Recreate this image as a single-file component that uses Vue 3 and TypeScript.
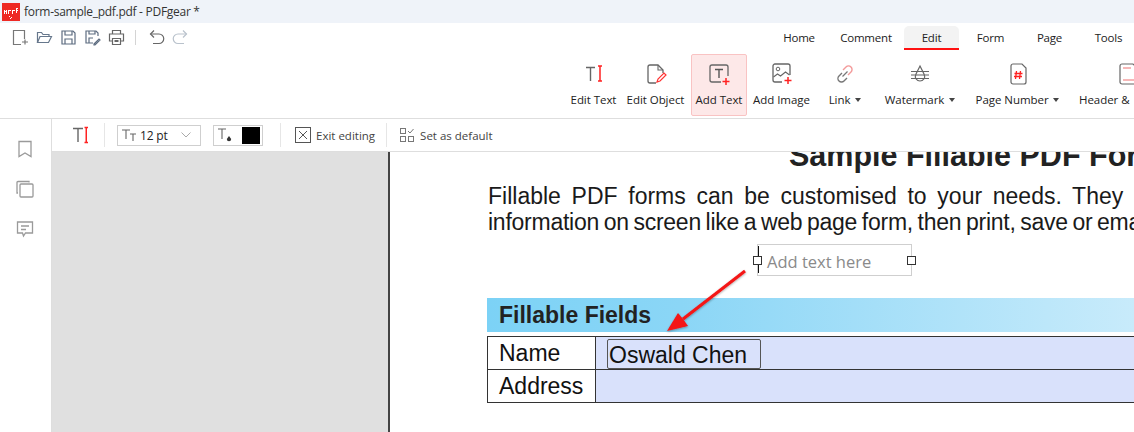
<script setup lang="ts">
const tabs = [
  { label: 'Home', w: 58 },
  { label: 'Comment', w: 76 },
  { label: 'Edit', w: 55, active: true },
  { label: 'Form', w: 63 },
  { label: 'Page', w: 55 },
  { label: 'Tools', w: 63 },
]
</script>

<template>
  <div class="app">
    <header class="titlebar">
      <svg class="logo" width="18" height="18" viewBox="0 0 18 18">
        <rect width="18" height="18" fill="#ee2a24" />
        <path d="M2 7h1v1h1V7h1v4H4V9H3v2H2zM6 7h3v1H7v3H6zM10 7h3v1h-2v3h-1zM14 5h2v1h-1v1h1v1h-1v2h-1z" fill="#fff" />
        <path d="M7 13h1v1H7zM9 14h1v1H9zM8 15h1v1H8z" fill="#fff" />
      </svg>
      <span class="title">form-sample_pdf.pdf - PDFgear *</span>
    </header>

    <section class="top">
      <div class="topRow">
        <div class="quick">
          <svg width="17" height="17" viewBox="0 0 17 17" fill="none" stroke="#777" stroke-width="1.2"><path d="M9 15.500H1.500v-14h11V10" /><path d="M10 13h6M13 10.500v5" /></svg>
          <svg width="17" height="17" viewBox="0 0 17 17" fill="none" stroke="#66778c" stroke-width="1.2"><path d="M1.500 13.500v-10h4l1.500 2h6v2" /><path d="M1.500 13.500l2.500-6h11.500l-3 6z" /></svg>
          <svg width="17" height="17" viewBox="0 0 17 17" fill="none" stroke="#5d6c80" stroke-width="1.2"><path d="M2 2h11l2 2v11H2z" /><path d="M5 2v4h7V2M5 15v-5h7v5" /></svg>
          <svg width="17" height="17" viewBox="0 0 17 17" fill="none" stroke="#5d6c80" stroke-width="1.2"><path d="M9 14H2V2h10l2 2v3" /><path d="M5 2v3h6V2M5 14V9h4" /><path d="M10 15l5-5 1 1-5 5h-1z" /></svg>
          <svg width="17" height="17" viewBox="0 0 17 17" fill="none" stroke="#666" stroke-width="1.2"><path d="M4.500 5V1.500h8V5" /><path d="M4 12H1.500V5h14v7H13" /><path d="M4.500 9.500h8v6h-8z" /><path d="M6.500 12h4" stroke-width="2" /></svg>
          <span class="vsep"></span>
          <svg width="16" height="17" viewBox="0 0 16 17" fill="none" stroke="#666" stroke-width="1.2"><path d="M5 1.500L1.500 5 5 8.500" /><path d="M1.500 5H10a4.500 4.500 0 0 1 0 9.500H4" /></svg>
          <svg width="16" height="17" viewBox="0 0 16 17" fill="none" stroke="#b9c2cc" stroke-width="1.2"><path d="M11 1.500L14.500 5 11 8.500" /><path d="M14.500 5H6a4.500 4.500 0 0 0 0 9.500h6" /></svg>
        </div>
        <nav class="tabs">
          <div v-for="t in tabs" :key="t.label" class="tab" :class="{ active: t.active }" :style="{ width: t.w + 'px' }">{{ t.label }}</div>
        </nav>
      </div>
      <div class="ribbon">
        <div class="rb" style="width: 57px">
          <svg width="24" height="24" viewBox="0 0 24 24" fill="none"><path d="M4 5.500h9M8.500 5.500V19" stroke="#666" stroke-width="1.400" /><path d="M16 4h4M16 19h4M18 4v15" stroke="#f22" stroke-width="1.500" /></svg>
          <span>Edit Text</span>
        </div>
        <div class="rb" style="width: 67px">
          <svg width="24" height="24" viewBox="0 0 24 24" fill="none"><path d="M12 21H6a2 2 0 0 1-2-2V5a2 2 0 0 1 2-2h8l5 5v3" stroke="#666" stroke-width="1.300" /><path d="M14 3v5h5" stroke="#666" stroke-width="1.100" /><path d="M13 20l1-3 6-6 2 2-6 6z" stroke="#f33" stroke-width="1.200" /></svg>
          <span>Edit Object</span>
        </div>
        <div class="rb on" style="width: 56px">
          <svg width="24" height="24" viewBox="0 0 24 24" fill="none"><path d="M14 20H5a2 2 0 0 1-2-2V5a2 2 0 0 1 2-2h14a2 2 0 0 1 2 2v9" stroke="#666" stroke-width="1.300" /><path d="M8 7.500h8M12 7.500V16" stroke="#555" stroke-width="1.400" /><path d="M19 16v7M15.500 19.500h7" stroke="#f22" stroke-width="1.500" /></svg>
          <span>Add Text</span>
        </div>
        <div class="rb" style="width: 69px">
          <svg width="24" height="24" viewBox="0 0 24 24" fill="none"><path d="M12 20H5a2 2 0 0 1-2-2V4a2 2 0 0 1 2-2h13a2 2 0 0 1 2 2v9" stroke="#666" stroke-width="1.300" /><circle cx="8" cy="7" r="1.800" stroke="#666" /><path d="M3.500 15l4-3 3 2 5-4 4 3" stroke="#666" stroke-width="1.100" /><path d="M18 15v7M14.500 18.500h7" stroke="#f22" stroke-width="1.500" /></svg>
          <span>Add Image</span>
        </div>
        <div class="rb" style="width: 58px">
          <svg width="24" height="24" viewBox="0 0 24 24" fill="none"><path d="M10 8l3-3a3.500 3.500 0 0 1 5 5l-3 3" stroke="#f39a9a" stroke-width="1.400" /><path d="M14 16l-3 3a3.500 3.500 0 0 1-5-5l3-3" stroke="#777" stroke-width="1.400" /><path d="M9.500 14.500l5-5" stroke="#777" stroke-width="1.300" /></svg>
          <span>Link <i class="caret"></i></span>
        </div>
        <div class="rb" style="width: 92px">
          <svg width="24" height="24" viewBox="0 0 24 24" fill="none" stroke="#666" stroke-width="1.200"><path d="M12 4l4 8c2 4-1 7-4 7s-6-3-4-7z" /><path d="M3 9.500h18M3 13h18M3 16.500h18" /></svg>
          <span>Watermark <i class="caret"></i></span>
        </div>
        <div class="rb" style="width: 103px">
          <svg width="24" height="24" viewBox="0 0 24 24" fill="none"><path d="M5 4a2 2 0 0 1 2-2h9l4 4v14a2 2 0 0 1-2 2H7a2 2 0 0 1-2-2z" stroke="#666" stroke-width="1.200" /><path d="M10.500 9l-1 8M14.500 9l-1 8M8.500 11.500h8M8 14.500h8" stroke="#f22" stroke-width="1.300" /></svg>
          <span>Page Number <i class="caret"></i></span>
        </div>
        <div class="rb clip">
          <svg width="24" height="24" viewBox="0 0 24 24" fill="none"><path d="M3 4a2 2 0 0 1 2-2h11l5 5v13a2 2 0 0 1-2 2H5a2 2 0 0 1-2-2z" stroke="#666" stroke-width="1.200" /><path d="M6 6h8M6 18h12" stroke="#f4a0a0" stroke-width="1.500" /></svg>
          <span>Header &amp;</span>
        </div>
      </div>
    </section>

    <section class="main">
      <aside class="side">
        <svg width="16" height="18" viewBox="0 0 16 18" fill="none" stroke="#9a9a9a" stroke-width="1.300"><path d="M2 1.500h12v15L8 13l-6 3.500z" /></svg>
        <svg width="18" height="18" viewBox="0 0 18 18" fill="none" stroke="#9a9a9a" stroke-width="1.300"><path d="M13 2.500V1.500H2a1 1 0 0 0-1 1V13h1" /><rect x="4" y="4" width="13" height="13" rx="1" /></svg>
        <svg width="18" height="18" viewBox="0 0 18 18" fill="none" stroke="#9a9a9a" stroke-width="1.300"><path d="M1.500 2h15v11h-7l-2 3-1-3h-5z" /><path d="M5 6h8M5 9.500h5" /></svg>
      </aside>
      <div class="work">
        <div class="props">
          <svg class="propT" width="24" height="20" viewBox="0 0 24 20" fill="none"><path d="M2 3.500h10M7 3.500V17" stroke="#666" stroke-width="1.400" /><path d="M13.500 2.500h3.500M13.500 17.500h3.500M15.250 2.500v15" stroke="#f22" stroke-width="1.500" /></svg>
          <span class="psep"></span>
          <div class="sizeBox">
            <svg width="16" height="14" viewBox="0 0 16 14" fill="none" stroke="#666" stroke-width="1.100"><path d="M1 2h8M5 2v9M9 6h6M12 6v7" /></svg>
            <span class="sizeText">12 pt</span>
            <svg class="chev" width="10" height="6" viewBox="0 0 10 6" fill="none" stroke="#aaa"><path d="M.5.500L5 5 9.500.500" /></svg>
          </div>
          <div class="colorBox">
            <svg width="16" height="16" viewBox="0 0 16 16"><path d="M1 2h8M5 2v10" fill="none" stroke="#666" stroke-width="1.100" /><path d="M12 9l2.200 3a2.200 2.200 0 1 1-4.400 0z" fill="#333" /></svg>
            <span class="swatch"></span>
          </div>
          <span class="psep sep2"></span>
          <div class="pbtn">
            <svg width="16" height="16" viewBox="0 0 16 16" fill="none" stroke="#555" stroke-width="1"><rect x=".5" y=".5" width="15" height="15" /><path d="M4 4l8 8M12 4l-8 8" /></svg>
            <span>Exit editing</span>
          </div>
          <span class="psep sep3"></span>
          <div class="pbtn">
            <svg width="15" height="14" viewBox="0 0 15 14" fill="none" stroke="#777"><rect x=".5" y=".5" width="5" height="5" /><rect x=".5" y="8.500" width="5" height="5" /><rect x="8.500" y="8.500" width="5" height="5" /><path d="M8 3l2 2 3.500-4" /></svg>
            <span>Set as default</span>
          </div>
        </div>
        <div class="canvas">
          <div class="gray"></div>
          <div class="page">
            <h1 class="docTitle">Sample Fillable PDF Form</h1>
            <p class="docText just">Fillable PDF forms can be customised to your needs. They allow you to</p>
            <p class="docText">information on screen like a web page form, then print, save or email</p>
            <div class="spacer"></div>
            <div class="band">Fillable Fields</div>
            <div class="rows">
              <div class="row first">
                <div class="lbl">Name</div>
                <div class="val"><span class="field">Oswald Chen</span></div>
              </div>
              <div class="row">
                <div class="lbl">Address</div>
                <div class="val"></div>
              </div>
            </div>
            <div class="textBox">
              <span class="placeholder">Add text here</span>
              <i class="caretLine"></i>
              <i class="handle hl"></i>
              <i class="handle hr"></i>
            </div>
            <svg class="arrow" width="100" height="70" viewBox="0 0 100 70">
              <defs>
                <filter id="sh" x="-20%" y="-20%" width="140%" height="140%">
                  <feDropShadow dx="0" dy="1" stdDeviation="1" flood-color="#000" flood-opacity=".35" />
                </filter>
              </defs>
              <g filter="url(#sh)">
                <path d="M82 5L20 53" stroke="#f41414" stroke-width="3" fill="none" />
                <path d="M4 65L15 47 20 53 25 60z" fill="#f41414" />
              </g>
            </svg>
          </div>
        </div>
      </div>
    </section>
  </div>
</template>

<style>
html, body { margin: 0; background: #fff; }
</style>

<style scoped>
.app { width: 1134px; height: 432px; overflow: hidden; display: flex; flex-direction: column; font-family: "Open Sans", "Noto Sans", sans-serif; color: #222; background: #fff; }
.titlebar { height: 23px; flex: none; background: #eff3f9; display: flex; align-items: center; padding-left: 2px; gap: 4px; box-sizing: border-box; }
.title { font-size: 12px; letter-spacing: -.28px; color: #333; }
.top { height: 96px; flex: none; box-sizing: border-box; border-bottom: 1px solid #dedede; display: flex; flex-direction: column; }
.topRow { height: 30px; display: flex; justify-content: space-between; }
.quick { display: flex; align-items: flex-start; gap: 7px; padding: 6px 0 0 12px; }
.quick svg { display: block; }
.vsep { width: 1px; height: 15px; background: #d4d4d4; margin: 1px 6px 0 3px; }
.tabs { display: flex; margin-top: 3px; margin-right: -6px; height: 24px; }
.tab { font-size: 11.500px; line-height: 23px; text-align: center; letter-spacing: -.2px; color: #222; box-sizing: border-box; }
.tab.active { background: #f3f3f3; border-radius: 5px 5px 0 0; border-bottom: 2px solid #f11; }
.ribbon { display: flex; justify-content: flex-start; padding-left: 565px; margin-top: 1px; height: 62px; overflow: hidden; }
.rb { flex: none; box-sizing: border-box; display: flex; flex-direction: column; align-items: center; font-size: 11.500px; letter-spacing: -.05px; padding-top: 8px; gap: 6px; white-space: nowrap; color: #222; }
.rb span { line-height: 16px; display: block; }
.rb.on { margin-left: 2px; background: #fde8e8; border: 1px solid #f9c3c3; border-radius: 2px; padding-top: 7px; }
.rb.clip { align-items: flex-start; padding-left: 10px; width: 65px; }
.rb.clip svg { margin-left: 38px; }
.caret { display: inline-block; width: 0; height: 0; border-left: 3.500px solid transparent; border-right: 3.500px solid transparent; border-top: 4px solid #444; vertical-align: 2px; margin-left: 2px; }
.main { flex: 1; min-height: 0; display: flex; }
.side { width: 51px; flex: none; border-right: 1px solid #dedede; display: flex; flex-direction: column; align-items: center; gap: 22px; padding-top: 21px; }
.side svg { display: block; margin-right: 1px; }
.work { flex: 1; min-width: 0; display: flex; flex-direction: column; }
.props { height: 33px; flex: none; box-sizing: border-box; border-bottom: 1px solid #dedede; display: flex; align-items: center; font-size: 11.500px; letter-spacing: 0; color: #444; }
.propT { margin-left: 19px; }
.psep { width: 1px; height: 24px; background: #e6e6e6; margin: 0 12px 0 9px; }
.sep2 { margin: 0 14px 0 17px; }
.sep3 { margin: 0 13px 0 11px; }
.sizeBox { width: 84px; height: 21px; box-sizing: border-box; border: 1px solid #cfcfcf; display: flex; align-items: center; padding: 0 9px 0 3px; gap: 3px; color: #222; font-size: 12px; letter-spacing: -.2px; }
.chev { margin-left: auto; }
.colorBox { width: 50px; height: 21px; box-sizing: border-box; border: 1px solid #cfcfcf; margin-left: 12px; display: flex; align-items: center; padding-left: 3px; justify-content: space-between; padding-right: 2px; }
.swatch { width: 18px; height: 17px; background: #000; }
.pbtn { display: flex; align-items: center; gap: 5px; }
.canvas { flex: 1; min-height: 0; display: flex; overflow: hidden; }
.gray { width: 336px; flex: none; background: #e0e0e0; border-right: 2px solid #444; }
.page { flex: 1; position: relative; overflow: hidden; background: #fff; font-family: "Liberation Sans", Arial, sans-serif; color: #111; }
.docTitle { margin: -12px 0 0 399px; font-size: 30.500px; line-height: 30px; font-weight: 700; white-space: nowrap; color: #222; }
.docText { margin: 0 0 0 98px; width: 776px; font-size: 23px; line-height: 26px; white-space: nowrap; letter-spacing: -.25px; word-spacing: -1.500px; color: #1a1a1a; }
.docText.just { margin-top: 13px; white-space: normal; text-align: justify; text-align-last: justify; letter-spacing: 0; word-spacing: 0; }
.spacer { height: 63px; }
.band { margin-left: 97px; height: 34px; line-height: 34px; padding-left: 12px; font-size: 23px; font-weight: 700; color: #222; background: linear-gradient(90deg, #7cd2f6 0%, #8bd6f6 30%, #c8ebfb 100%); }
.rows { margin: 4px 0 0 97px; border: 1px solid #333; border-right: 0; }
.row { height: 32px; display: flex; }
.row.first { border-bottom: 1px solid #333; }
.lbl { width: 108px; flex: none; box-sizing: border-box; padding-left: 11px; font-size: 23px; line-height: 32px; border-right: 1px solid #333; color: #111; }
.val { flex: 1; background: #d9e1fb; position: relative; }
.field { position: absolute; left: 11px; top: 2px; width: 154px; height: 30px; box-sizing: border-box; border: 1px solid #555; border-radius: 2px; font-size: 23px; line-height: 30px; padding-left: 1px; color: #111; }
.textBox { position: absolute; left: 367px; top: 92px; width: 155px; height: 32px; box-sizing: border-box; border: 1px solid #cfcfcf; }
.placeholder { position: absolute; left: 9px; top: 4px; font-family: "Open Sans", sans-serif; font-size: 16.500px; line-height: 26px; color: #8a8a8a; white-space: nowrap; }
.caretLine { position: absolute; left: 0; top: 1px; width: 1px; height: 27px; background: #111; }
.handle { position: absolute; top: 11px; width: 7px; height: 7px; background: #fff; border: 1px solid #333; }
.hl { left: -5px; }
.hr { right: -5px; }
.arrow { position: absolute; left: 273px; top: 114px; }
</style>
